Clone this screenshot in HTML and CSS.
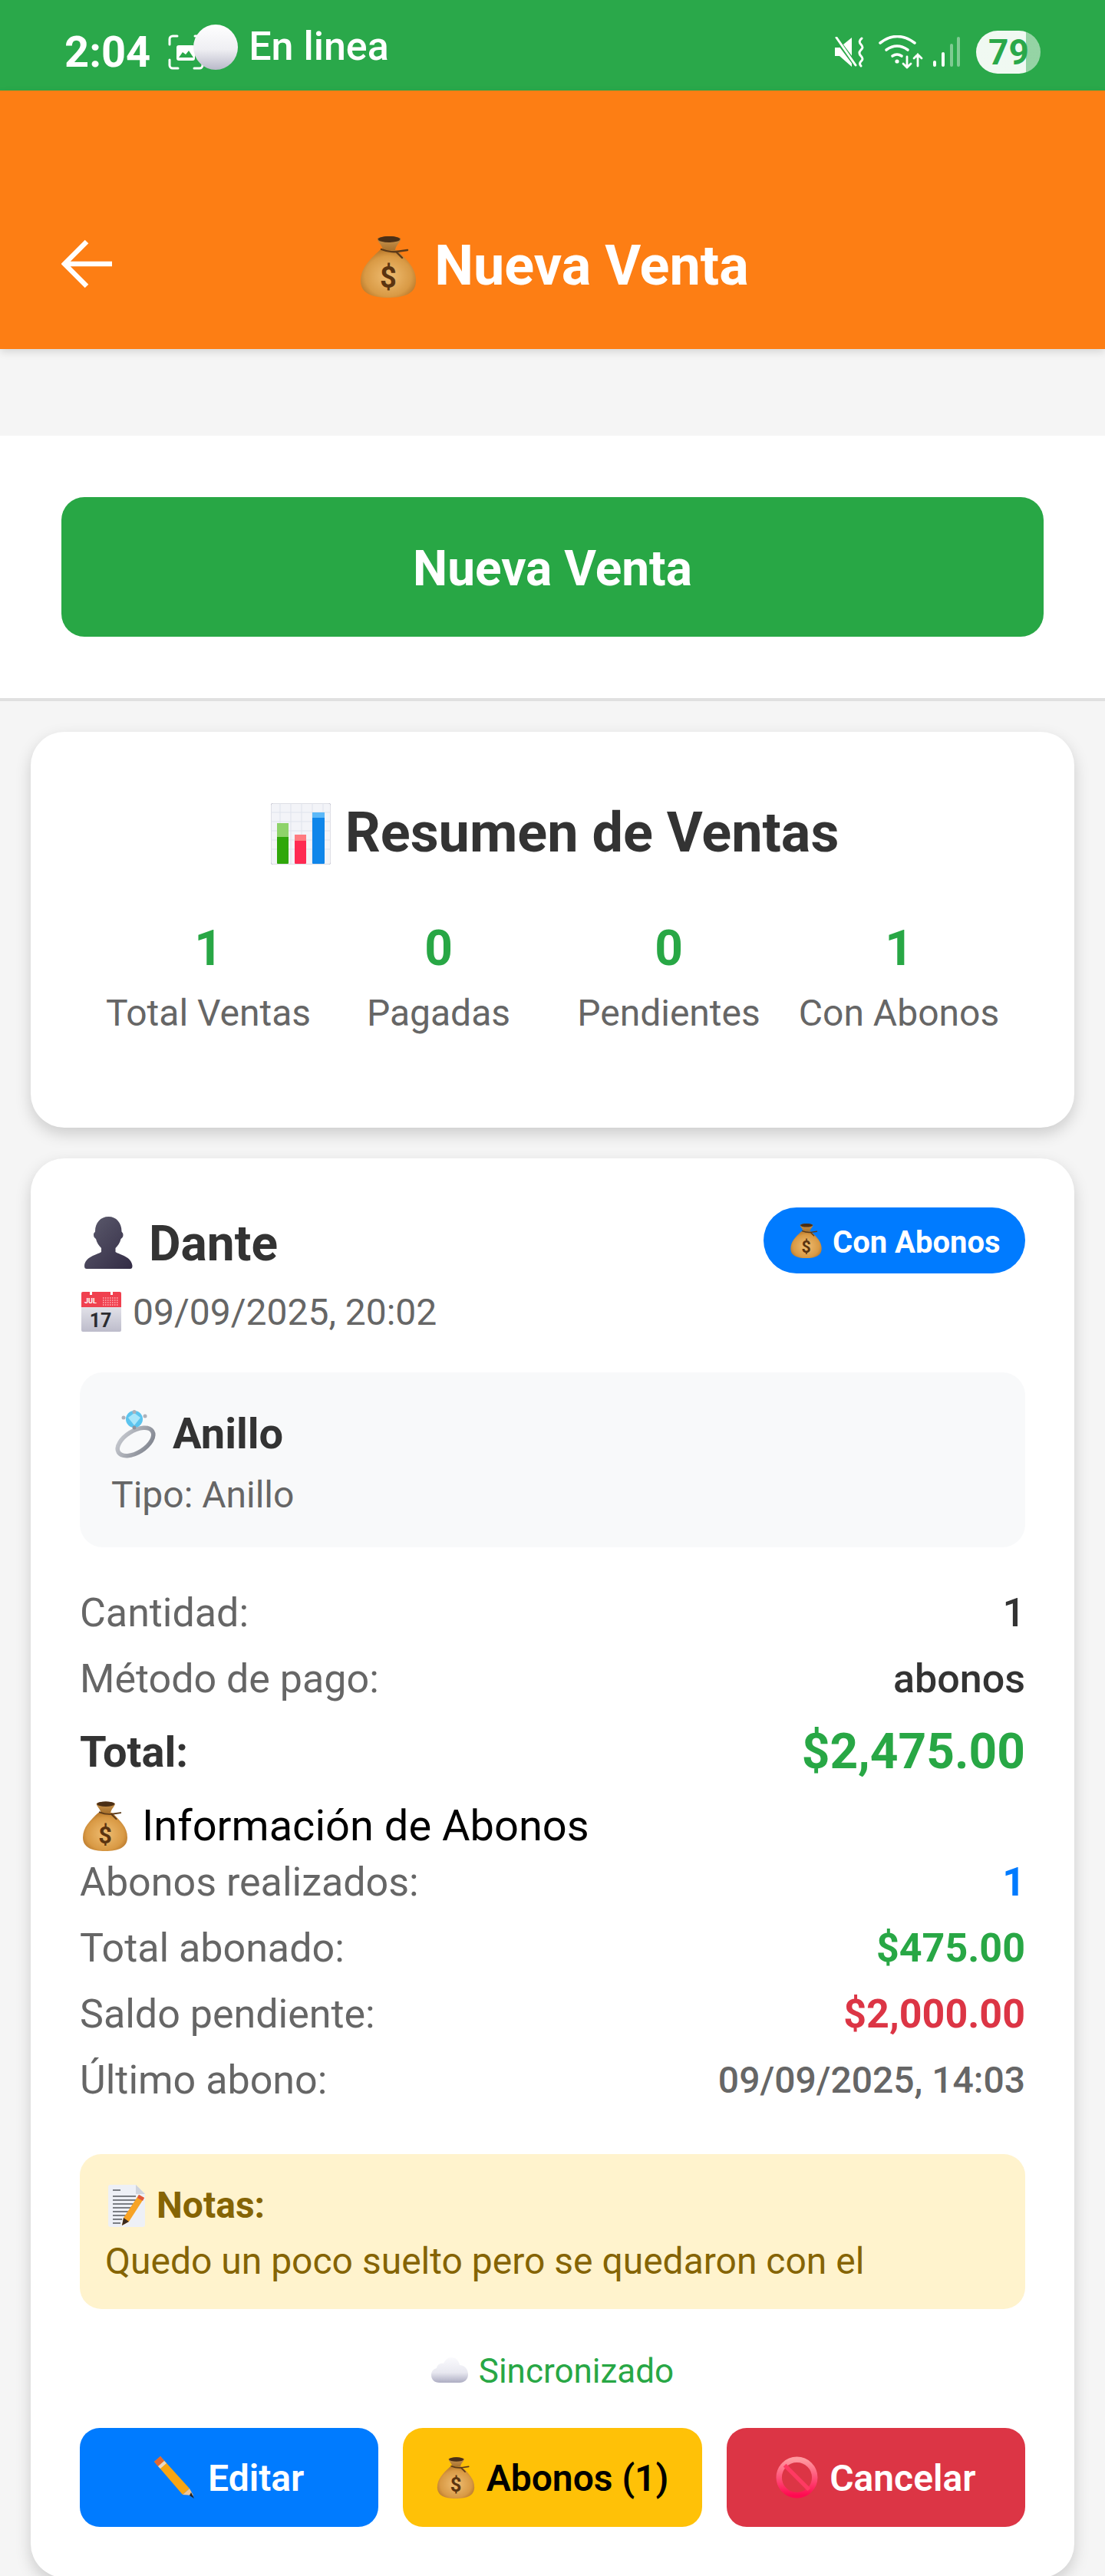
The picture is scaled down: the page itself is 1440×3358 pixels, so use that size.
FILE: index.html
```html
<!DOCTYPE html>
<html lang="es">
<head>
<meta charset="utf-8">
<title>Nueva Venta</title>
<link rel="stylesheet" href="styles.css">
</head>
<body>
<svg class="defs" aria-hidden="true">
  <defs>
    <radialGradient id="gBag" cx="50%" cy="55%" r="60%"><stop offset="0" stop-color="#efbd72"/><stop offset=".7" stop-color="#d99a45"/><stop offset="1" stop-color="#b06f24"/></radialGradient>
    <linearGradient id="gNeck" x1="0" x2="0" y1="0" y2="1"><stop offset="0" stop-color="#5a3a1c"/><stop offset=".4" stop-color="#c08a44"/><stop offset="1" stop-color="#a8722e"/></linearGradient>
    <linearGradient id="gPerson" x1="0" x2="1" y1="0" y2="1"><stop offset="0" stop-color="#5d5c6e"/><stop offset="1" stop-color="#332c45"/></linearGradient>
    <linearGradient id="gCal" x1="0" x2="0" y1="0" y2="1"><stop offset="0" stop-color="#f8f8fa"/><stop offset="1" stop-color="#bdbccb"/></linearGradient>
    <linearGradient id="gRing" x1="0" x2="1" y1="0" y2="1"><stop offset="0" stop-color="#c9ccd2"/><stop offset="1" stop-color="#7d818b"/></linearGradient>
    <linearGradient id="gCloud" x1="0" x2="0" y1="0" y2="1"><stop offset="0" stop-color="#fafafd"/><stop offset=".6" stop-color="#e8e8f0"/><stop offset="1" stop-color="#adadc2"/></linearGradient>
    <linearGradient id="gBan" x1="0" x2="0" y1="0" y2="1"><stop offset="0" stop-color="#ff9aa0"/><stop offset="1" stop-color="#ff0a50"/></linearGradient>
    <symbol id="bag" viewBox="0 0 72 82">
      <path d="M25 20C11 33 0 44 0 60c0 16 14 22 36 22s36-6 36-22c0-16-11-27-25-40z" fill="url(#gBag)"/>
      <path d="M22 5c6-4 24-4 30 0 0 5-6 8-7 15H29c-1-7-7-10-7-15z" fill="url(#gNeck)"/>
      <ellipse cx="37" cy="6" rx="14" ry="4" fill="#4a2f16"/>
      <path d="M27 19q10 4 20 3l14-2M46 22l8 8" fill="none" stroke="#5c3a18" stroke-width="2.4" stroke-linecap="round"/>
      <text x="36" y="69" text-anchor="middle" class="bag-sign">$</text>
    </symbol>
    <symbol id="chart" viewBox="0 0 78 80">
      <rect x="0" y="0" width="78" height="80" rx="3" fill="#f3f4f8" stroke="#c9c9d3"/>
      <path d="M0 12h78M0 24h78M0 36h78M0 48h78M0 60h78M12 0v80M26 0v80M40 0v80M54 0v80M68 0v80" stroke="#dfe3ec" stroke-width="1"/>
      <rect x="8" y="26" width="15" height="53" rx="1" fill="#2fa70a"/><rect x="8" y="26" width="15" height="18" fill="#8ed36a"/>
      <rect x="31" y="41" width="15" height="38" rx="1" fill="#ff2a52"/><rect x="31" y="41" width="15" height="8" fill="#ff7b80"/>
      <rect x="54" y="12" width="16" height="67" rx="1" fill="#0f86ea"/><rect x="54" y="12" width="16" height="7" fill="#5cb8f8"/>
    </symbol>
    <symbol id="person" viewBox="0 0 63 68">
      <path d="M31.500 0c10 0 17 8 17 19 0 2 2 1 2 5 0 3-2 4-3 5-1 5-4 9-7 12v5c6 4 21 6 22 18 0 3-1 4-3 4H3c-2 0-3-1-3-4 1-12 16-14 22-18v-5c-3-3-6-7-7-12-1-1-3-2-3-5 0-4 2-3 2-5C14 8 21 0 31.500 0z" fill="url(#gPerson)"/>
    </symbol>
    <symbol id="calendar" viewBox="0 0 52 52">
      <rect width="52" height="52" rx="2" fill="url(#gCal)"/>
      <path d="M2 0h48a2 2 0 0 1 2 2v18H0V2a2 2 0 0 1 2-2z" fill="#f0404f"/>
      <rect x="11" y="0" width="3" height="4" fill="#fff"/><rect x="38" y="0" width="3" height="4" fill="#fff"/>
      <text x="4" y="15" class="cal-month">JUL</text>
      <path d="M28 8h20M28 11h20M28 14h20M28 17h20" stroke="#ffb5ba" stroke-width="1.300" stroke-dasharray="1.500 1.500"/>
      <text x="25" y="46" text-anchor="middle" class="cal-day">17</text>
    </symbol>
    <symbol id="ring" viewBox="0 0 57 64">
      <ellipse cx="28.500" cy="41.500" rx="26" ry="14" transform="rotate(-32 28.500 41.500)" fill="none" stroke="url(#gRing)" stroke-width="5.500"/>
      <circle cx="27" cy="12" r="11" fill="#5cc4ee"/><path d="M19 10l8-6 8 6-8 10z" fill="#a9e6fa"/>
      <circle cx="13" cy="10" r="2.500" fill="#aeb1ba"/><circle cx="27" cy="2.500" r="2.500" fill="#aeb1ba"/><circle cx="41" cy="8" r="2.500" fill="#aeb1ba"/><circle cx="27" cy="23" r="2.500" fill="#8f939d"/>
    </symbol>
    <symbol id="memo" viewBox="0 0 48 55">
      <path d="M3 0h33l12 12v40a3 3 0 0 1-3 3H3a3 3 0 0 1-3-3V3a3 3 0 0 1 3-3z" fill="#eef0f6"/>
      <path d="M36 0v12h12z" fill="#cfd3dc"/>
      <path d="M6 7h10M6 15h30M6 20h30M6 25h30M6 30h27M6 35h22M6 40h18M6 45h12M6 50h10" stroke="#55585f" stroke-width="1.400"/>
      <path d="M40 13l7 4-20 31-9 5 2-10z" fill="#f7a326"/><path d="M40 13l7 4-2 4-7-4z" fill="#e0573a"/><path d="M20 43l-2 10 9-5z" fill="#3a2a20"/>
    </symbol>
    <symbol id="cloud" viewBox="0 0 48 33">
      <path d="M11 33C4 33 0 29 0 23c0-5 3-8 7-9 1-5 5-7 9-6 2-5 6-8 10-8 6 0 10 4 11 10 6 0 11 5 11 12 0 7-5 11-11 11z" fill="url(#gCloud)"/>
    </symbol>
    <symbol id="pencil" viewBox="0 0 55 55">
      <path d="M0 7L8 0 46 42l-9 8z" fill="#f8a512"/><path d="M0 7L8 0l5 6-8 7z" fill="#e4672f"/><path d="M5 13l8-7 3 3-8 7z" fill="#e8d7c8"/>
      <path d="M37 50l9-8 5 9z" fill="#f0c594"/><path d="M48 47l4 8-6-4z" fill="#222"/>
    </symbol>
    <symbol id="ban" viewBox="0 0 52 52">
      <circle cx="26" cy="26" r="22" fill="none" stroke="url(#gBan)" stroke-width="7"/>
      <path d="M11 11l30 30" stroke="#ff3a62" stroke-width="5"/>
    </symbol>
  </defs>
</svg>

<header class="status-bar">
  <div class="status-left">
    <span class="clock">2:04</span>
    <svg class="shot-icon" viewBox="0 0 47 46" fill="none" stroke="#fff" stroke-width="3" stroke-linecap="round">
      <path d="M12 2H6a4 4 0 0 0-4 4v7M35 2h6a4 4 0 0 1 4 4v7M2 33v7a4 4 0 0 0 4 4h7M45 33v7a4 4 0 0 1-4 4h-7"/>
      <rect x="11" y="14" width="24" height="20" rx="3" fill="#fff" stroke="none"/>
      <path d="M14 30l5-7 4 3 4-5 6 9z" fill="#2aa84a" stroke="none"/>
    </svg>
    <span class="ball"></span>
    <span class="online">En linea</span>
  </div>
  <div class="status-right">
    <svg class="mute-icon" viewBox="0 0 39 40" fill="none" stroke-linecap="round">
      <path d="M0 14h6L22 1v38L6 25H0z" fill="#fff" transform="translate(1 0)"/>
      <path d="M3 3l24 32" stroke="#2aa84a" stroke-width="6"/>
      <path d="M3 1l25 36" stroke="#fff" stroke-width="3"/>
      <path d="M36 2q-5 4-1 8t0 7q-4 4 0 8t0 7q-3 3 0 6" stroke="#fff" stroke-width="3"/>
    </svg>
    <svg class="wifi-icon" viewBox="0 0 58 44" fill="none" stroke="#fff" stroke-width="3.600" stroke-linecap="round">
      <path d="M2 10Q24-7 47 10"/><path d="M10 19q14-10 28 0"/><path d="M18 27q6-4 12 0"/>
      <circle cx="24" cy="34" r="2.600" fill="#fff" stroke="none"/>
      <path d="M37 28v14m-5-5l5 5 5-5M51 40V25m-5 5l5-5 5 5" stroke-width="2.800"/>
    </svg>
    <svg class="signal-icon" viewBox="0 0 35 39" fill="none" stroke="#fff" stroke-width="4" stroke-linecap="round">
      <path d="M2 33v4M13 22v15"/><path d="M24 11v26M33 2v35" opacity=".4"/>
    </svg>
    <span class="battery">79</span>
  </div>
</header>

<div class="app-bar">
  <svg class="back-icon" viewBox="0 0 66 64" fill="none" stroke="#fff" stroke-width="6.500"><path d="M33 3L4 32l29 29M4 32h62"/></svg>
  <h1 class="app-title"><svg class="emo emo-title"><use href="#bag"/></svg>Nueva Venta</h1>
  <span class="app-spacer"></span>
</div>

<main class="content">
  <section class="action-panel">
    <button class="primary-btn" type="button">Nueva Venta</button>
  </section>

  <section class="card summary">
    <h2 class="summary-title"><svg class="emo emo-chart"><use href="#chart"/></svg>Resumen de Ventas</h2>
    <div class="stats">
      <div class="stat"><div class="stat-num">1</div><div class="stat-label">Total Ventas</div></div>
      <div class="stat"><div class="stat-num">0</div><div class="stat-label">Pagadas</div></div>
      <div class="stat"><div class="stat-num">0</div><div class="stat-label">Pendientes</div></div>
      <div class="stat"><div class="stat-num">1</div><div class="stat-label">Con Abonos</div></div>
    </div>
  </section>

  <article class="card sale">
    <div class="sale-head">
      <div>
        <div class="client"><svg class="emo emo-person"><use href="#person"/></svg>Dante</div>
        <div class="sale-date"><svg class="emo emo-cal"><use href="#calendar"/></svg>09/09/2025, 20:02</div>
      </div>
      <span class="badge"><svg class="emo emo-badge"><use href="#bag"/></svg>Con Abonos</span>
    </div>

    <div class="product">
      <div class="product-name"><svg class="emo emo-ring"><use href="#ring"/></svg>Anillo</div>
      <div class="product-type">Tipo: Anillo</div>
    </div>

    <div class="rows first-rows">
      <div class="row"><span class="label">Cantidad:</span><span class="value">1</span></div>
      <div class="row"><span class="label">Método de pago:</span><span class="value">abonos</span></div>
    </div>
    <div class="row total-row"><span class="total-label">Total:</span><span class="total-value">$2,475.00</span></div>

    <div class="abonos-title"><svg class="emo emo-abonos"><use href="#bag"/></svg>Información de Abonos</div>
    <div class="rows">
      <div class="row"><span class="label">Abonos realizados:</span><span class="value strong blue">1</span></div>
      <div class="row"><span class="label">Total abonado:</span><span class="value strong green">$475.00</span></div>
      <div class="row"><span class="label">Saldo pendiente:</span><span class="value strong red">$2,000.00</span></div>
      <div class="row"><span class="label">Último abono:</span><span class="value date-value">09/09/2025, 14:03</span></div>
    </div>

    <div class="notes">
      <div class="notes-title"><svg class="emo emo-memo"><use href="#memo"/></svg>Notas:</div>
      <div class="notes-text">Quedo un poco suelto pero se quedaron con el</div>
    </div>

    <div class="sync"><svg class="emo emo-cloud"><use href="#cloud"/></svg>Sincronizado</div>

    <div class="actions">
      <button class="act act-blue" type="button"><svg class="emo emo-btn"><use href="#pencil"/></svg>Editar</button>
      <button class="act act-yellow" type="button"><svg class="emo emo-btnbag"><use href="#bag"/></svg>Abonos (1)</button>
      <button class="act act-red" type="button"><svg class="emo emo-btn"><use href="#ban"/></svg>Cancelar</button>
    </div>
  </article>
</main>
</body>
</html>
```

FILE: styles.css
```css
* { box-sizing: border-box; }
html, body { margin: 0; padding: 0; height: 3358px; overflow: hidden; }
body { width: 1440px; background: #f5f5f5; font-family: Roboto, "Liberation Sans", sans-serif; color: #333; }
h1, h2 { margin: 0; }
.defs { position: absolute; width: 0; height: 0; }
.bag-sign { font: 700 38px Roboto, sans-serif; fill: #5b3410; }
.cal-month { font: 700 9px Roboto, sans-serif; fill: #fff; }
.cal-day { font: 700 25px Roboto, sans-serif; fill: #2c2c30; }
.emo { display: block; flex: none; }

.status-bar { height: 118px; background: #2aa84a; display: flex; justify-content: space-between; color: #fff; }
.status-left { display: flex; align-items: flex-start; padding-left: 84px; }
.clock { font-size: 56px; font-weight: 700; line-height: 62px; margin-top: 37px; }
.shot-icon { width: 47px; height: 46px; margin: 45px 0 0 23px; }
.ball { width: 58px; height: 59px; margin: 32px 0 0 -14px; border-radius: 50%; background: linear-gradient(180deg, #fff 0%, #efeff3 55%, #b9b9c9 100%); }
.online { font-size: 52px; font-weight: 500; line-height: 60px; margin: 31px 0 0 14px; }
.status-right { display: flex; align-items: flex-start; padding-right: 84px; }
.mute-icon { width: 39px; height: 40px; margin-top: 48px; }
.wifi-icon { width: 58px; height: 44px; margin: 46px 0 0 19px; }
.signal-icon { width: 35px; height: 39px; margin: 48px 0 0 13px; }
.battery { width: 84px; height: 56px; margin: 40px 0 0 21px; border-radius: 28px; padding-left: 16px; font-size: 46px; font-weight: 700; line-height: 56px; color: #2aa84a; background: linear-gradient(90deg, rgba(255,255,255,.93) 77%, rgba(255,255,255,.5) 77%); }

.app-bar { height: 337px; background: #fd7e14; display: grid; grid-template-columns: 1fr auto 1fr; align-items: start; padding: 187px 80px 0; box-shadow: 0 4px 10px rgba(0,0,0,.12); position: relative; }
.back-icon { width: 66px; height: 64px; margin-top: 7px; }
.app-title { display: flex; align-items: flex-start; gap: 24px; padding-left: 6px; color: #fff; font-size: 72px; font-weight: 700; line-height: 84px; }
.emo-title { width: 72px; height: 82px; margin-top: 1px; }

.action-panel { margin-top: 113px; background: #fff; padding: 80px; height: 346px; border-bottom: 4px solid #e0e0e0; }
.primary-btn { display: block; width: 100%; height: 182px; border: 0; border-radius: 30px; padding: 5px 0 0; background: #28a745; color: #fff; font-family: inherit; font-size: 64px; font-weight: 700; }

.card { margin: 40px 40px 0; background: #fff; border-radius: 44px; box-shadow: 0 8px 20px rgba(0,0,0,.17); }
.summary { padding: 90px 0 0; height: 516px; }
.summary-title { display: flex; justify-content: center; align-items: flex-start; gap: 19px; padding-left: 6px; font-size: 72px; line-height: 84px; font-weight: 700; color: #333; }
.emo-chart { width: 78px; height: 80px; margin-top: 3px; }
.stats { display: grid; grid-template-columns: repeat(4, 300px); justify-content: center; margin-top: 71px; padding-left: 3px; }
.stat { text-align: center; }
.stat-num { font-size: 64px; line-height: 76px; font-weight: 700; color: #28a745; }
.stat-label { margin-top: 16px; font-size: 48px; line-height: 60px; color: #666; }

.sale { padding: 64px 64px 0; height: 1850px; }
.sale-head { display: flex; justify-content: space-between; align-items: flex-start; }
.client { display: flex; align-items: flex-start; gap: 21px; margin: 10px 0 0 6px; font-size: 64px; line-height: 76px; font-weight: 700; color: #333; }
.emo-person { width: 63px; height: 68px; margin-top: 2px; }
.sale-date { display: flex; align-items: flex-start; gap: 15px; margin: 21px 0 0 2px; font-size: 48px; line-height: 60px; color: #666; }
.emo-cal { width: 52px; height: 52px; margin-top: 3px; }
.badge { display: flex; align-items: center; gap: 14px; height: 86px; width: 341px; padding: 4px 0 0 35px; border-radius: 43px; background: #007bff; color: #fff; font-size: 40px; font-weight: 700; }
.emo-badge { width: 41px; height: 46px; margin-top: -4px; }

.product { margin-top: 48px; height: 228px; padding: 46px 41px 0; border-radius: 30px; background: #f8f9fa; }
.product-name { display: flex; align-items: flex-start; gap: 20px; margin-left: 3px; font-size: 56px; line-height: 68px; font-weight: 700; color: #333; }
.emo-ring { width: 57px; height: 64px; margin-top: 3px; }
.product-type { margin-top: 16px; font-size: 48px; line-height: 60px; color: #666; }

.rows { display: flex; flex-direction: column; gap: 22px; }
.first-rows { margin-top: 54px; }
.row { display: flex; justify-content: space-between; align-items: center; }
.label { font-size: 52px; line-height: 64px; color: #666; }
.value { font-size: 52px; line-height: 64px; font-weight: 500; color: #333; }
.strong { font-weight: 700; }
.blue { color: #007bff; }
.green { color: #28a745; }
.red { color: #dc3545; }
.date-value { font-size: 48px; font-weight: 500; color: #666; }
.total-row { margin-top: 25px; }
.total-label { font-size: 56px; font-weight: 700; color: #333; }
.total-value { font-size: 64px; line-height: 76px; font-weight: 700; color: #28a745; }
.abonos-title { display: flex; align-items: flex-start; gap: 19px; margin: 24px 0 8px 4px; font-size: 56px; line-height: 68px; color: #000; }
.emo-abonos { width: 58px; height: 66px; margin-top: 1px; }

.notes { margin-top: 64px; height: 202px; padding: 37px 33px 0; border-radius: 28px; background: #fff3cd; color: #856404; }
.notes-title { display: flex; align-items: flex-start; gap: 15px; margin-left: 4px; font-size: 48px; line-height: 60px; font-weight: 700; }
.emo-memo { width: 48px; height: 55px; margin-top: 3px; }
.notes-text { margin-top: 13px; font-size: 48px; line-height: 60px; }

.sync { display: flex; justify-content: center; align-items: flex-start; gap: 14px; margin-top: 53px; font-size: 44px; line-height: 56px; color: #28a745; }
.emo-cloud { width: 48px; height: 33px; margin-top: 10px; }

.actions { display: grid; grid-template-columns: repeat(3, 1fr); gap: 32px; margin-top: 46px; }
.act { display: flex; justify-content: center; align-items: center; gap: 15px; height: 129px; border: 0; border-radius: 26px; padding: 2px 0 0; font-family: inherit; font-size: 48px; font-weight: 600; color: #fff; }
.act-blue { background: #007bff; }
.act-yellow { background: #ffc107; color: #000; }
.act-red { background: #dc3545; }
.emo-btn { width: 55px; height: 55px; margin-top: -2px; }
.emo-btnbag { width: 50px; height: 55px; margin-top: -2px; }
```
